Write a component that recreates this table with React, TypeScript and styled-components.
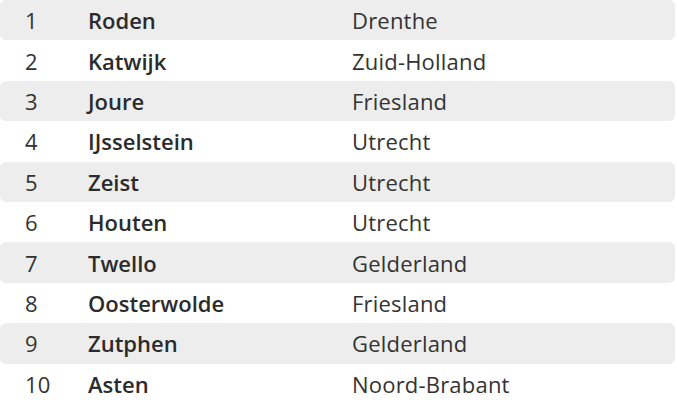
import React from "react";
import styled, { createGlobalStyle } from "styled-components";

const GlobalStyle = createGlobalStyle`
  html, body {
    margin: 0;
    padding: 0;
    background: #ffffff;
  }
`;

const Table = styled.div`
  width: 675px;
  display: flex;
  flex-direction: column;
  font-family: "Open Sans", Lato, sans-serif;
  color: #333333;
  font-size: 22px;
  letter-spacing: 0.2px;
`;

const Row = styled.div<{ $striped: boolean }>`
  display: grid;
  grid-template-columns: 88px 264px 1fr;
  align-items: center;
  height: 40.4px;
  border-radius: 6px;
  background: ${({ $striped }) => ($striped ? "#ededed" : "transparent")};
`;

const Rank = styled.span`
  padding-left: 25px;
  font-weight: 400;
`;

const City = styled.span`
  font-weight: 600;
  color: #2b2b2b;
  letter-spacing: 0;
`;

const Province = styled.span`
  font-weight: 400;
`;

const rows = [
  ["Roden", "Drenthe"],
  ["Katwijk", "Zuid-Holland"],
  ["Joure", "Friesland"],
  ["IJsselstein", "Utrecht"],
  ["Zeist", "Utrecht"],
  ["Houten", "Utrecht"],
  ["Twello", "Gelderland"],
  ["Oosterwolde", "Friesland"],
  ["Zutphen", "Gelderland"],
  ["Asten", "Noord-Brabant"],
];

const App = () => {
  return (
    <>
      <GlobalStyle />
      <Table>
        {rows.map(([city, province], idx) => (
          <Row key={city} $striped={idx % 2 === 0}>
            <Rank>{idx + 1}</Rank>
            <City>{city}</City>
            <Province>{province}</Province>
          </Row>
        ))}
      </Table>
    </>
  );
};

export default App;
